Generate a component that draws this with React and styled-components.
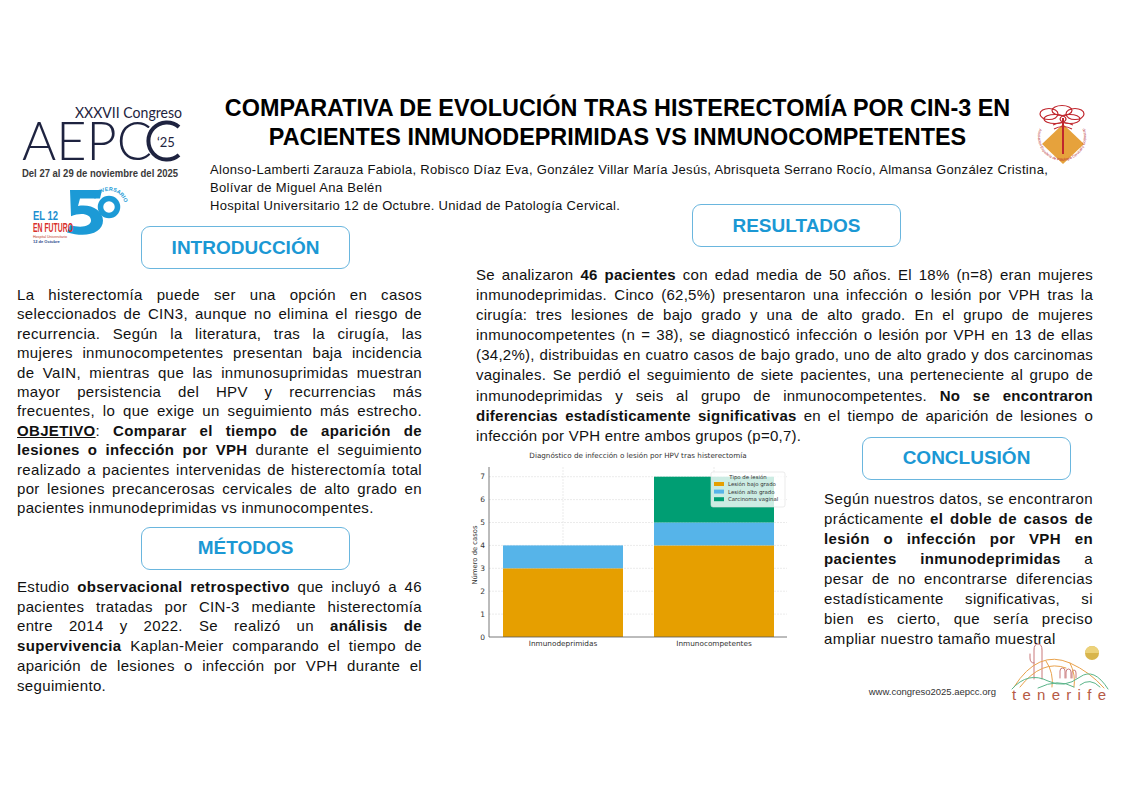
import React from 'react';
import styled, { createGlobalStyle } from 'styled-components';

const GlobalStyle = createGlobalStyle`
  body {
    margin: 0;
    background: #fff;
    font-family: "Liberation Sans", Arial, sans-serif;
  }
`;

function AepccLogo() {
  return (
    <LogoSvg width="170" height="85" viewBox="0 0 170 85" $ml={5}>
      <text x="53" y="18" fontSize="15" fill="#1e2340" fontFamily="Lato, Liberation Sans" textLength="107" lengthAdjust="spacingAndGlyphs">
        XXXVII Congreso
      </text>
      <text x="0" y="60" fontSize="53" fontWeight="300" fill="#1e2340" fontFamily="Lato, Liberation Sans" textLength="130" lengthAdjust="spacingAndGlyphs">
        AEPC
      </text>
      <path d="M157 27 A18.5 18.5 0 1 0 157 55" fill="none" stroke="#1e2340" strokeWidth="4" />
      <text x="135" y="47" fontSize="13" fill="#1e2340" fontFamily="Lato, Liberation Sans">‘25</text>
      <text x="0" y="77" fontSize="10.5" fontWeight="700" fill="#3a3a3a" fontFamily="Liberation Sans" textLength="156" lengthAdjust="spacingAndGlyphs">
        Del 27 al 29 de noviembre del 2025
      </text>
    </LogoSvg>
  );
}

function FiftyLogo() {
  return (
    <LogoSvg width="95" height="58" viewBox="0 0 95 58" $ml={13} $mt={3}>
      <path d="M40 2 H72 L70 10.5 H50 L48 18 C61 15.6 73 22.4 73 32.6 C73 43.7 60 48.8 45 46.2 L37 44.5 L40 36.9 C50 40.3 61 38.6 61 32.6 C61 25.8 51 24.1 41 28.2 Z" fill="#1c9ad6" />
      <circle cx="79" cy="19" r="8.5" fill="none" stroke="#1c9ad6" strokeWidth="5.5" />
      <defs>
        <path id="annivArc" d="M65 11 A16 16 0 1 1 88 32" />
      </defs>
      <text fontSize="5.4" fontWeight="700" fill="#1c9ad6" fontFamily="Liberation Sans">
        <textPath href="#annivArc">ANIVERSARIO</textPath>
      </text>
      <text x="3" y="32" fontSize="12" fontWeight="700" fill="#1c8fd0" fontFamily="Liberation Sans" textLength="25" lengthAdjust="spacingAndGlyphs">EL 12</text>
      <text x="3" y="44" fontSize="12" fontWeight="700" fill="#d9302c" fontFamily="Liberation Sans" textLength="40" lengthAdjust="spacingAndGlyphs">EN FUTURO</text>
      <text x="3" y="50" fontSize="3.6" fill="#c0392b" fontFamily="Liberation Sans">Hospital Universitario</text>
      <text x="3" y="55" fontSize="4" fontWeight="700" fill="#2a4a8a" fontFamily="Liberation Sans">12 de Octubre</text>
    </LogoSvg>
  );
}

function SocietyLogo() {
  return (
    <LogoSvg width="66" height="70" viewBox="0 0 66 70">
      <polygon points="35,20 56,40 35,60 14,40" fill="#e6a23c" />
      <g fill="none" stroke="#c0262d" strokeWidth="1.2">
        <ellipse cx="21" cy="10" rx="9" ry="5.5" />
        <ellipse cx="34" cy="6.5" rx="10" ry="5" />
        <ellipse cx="47" cy="10" rx="9" ry="5.5" />
        <ellipse cx="27" cy="15" rx="11" ry="4.5" />
        <ellipse cx="42" cy="15" rx="10" ry="4.5" />
        <path d="M25 21 Q35 16 45 21 M26 25 Q35 20 44 25" />
      </g>
      <line x1="35" y1="14" x2="35" y2="50" stroke="#c0262d" strokeWidth="2" />
      <defs>
        <path id="ringArc" d="M11.4 24.6 A24 24 0 1 0 56.6 24.6" />
      </defs>
      <text fontSize="3.7" fill="#b3262d" fontFamily="Liberation Sans">
        <textPath href="#ringArc">Asociación Española de Patología Cervical y Colposcopia</textPath>
      </text>
    </LogoSvg>
  );
}

function TenerifeLogo() {
  return (
    <svg width="100" height="62" viewBox="0 0 100 62">
      <circle cx="82" cy="12" r="7" fill="#d8b54c" />
      <path d="M75 12 A7 7 0 0 1 89 12 Z" fill="#ecd27a" />
      <g fill="none" strokeWidth="1" strokeLinecap="round">
        <path d="M24 38 V9 Q24 3 28 3 Q32 3 32 9 V38 M24 22 Q20 22 20 17 V13" stroke="#c9797a" />
        <path d="M50 37 V30 Q50 27 52.5 27 Q55 27 55 30 V37 M56 37 V31 Q56 28 58.5 28 Q61 28 61 31 V37 M62 37 V32 Q62 29 64 29 Q66 29 66 32 V37" stroke="#c9797a" />
        <path d="M4 46 Q28 8 60 22 Q80 31 94 47" stroke="#e9a24c" />
        <path d="M10 46 Q32 18 56 27 M36 20 Q44 32 42 46 M60 22 Q66 34 64 46" stroke="#e9a24c" />
        <path d="M2 48 Q18 30 38 40 Q54 48 70 36 Q84 26 98 48" stroke="#5bb58a" />
        <path d="M28 47 Q48 37 64 46 M70 44 Q80 36 90 46" stroke="#5bb58a" />
      </g>
      <text x="2" y="59" fontSize="15" fill="#b65a45" fontFamily="Liberation Sans" textLength="94" lengthAdjust="spacing">tenerife</text>
    </svg>
  );
}

const bars = [
  { x: 33, label: 'Inmunodeprimidas', parts: [3, 1, 0] },
  { x: 184, label: 'Inmunocompetentes', parts: [4, 1, 2] },
];
const colors = ['#E69F00', '#56B4E9', '#009E73'];
const legend = ['Lesión bajo grado', 'Lesión alto grado', 'Carcinoma vaginal'];
const yOf = (v) => 192 - v * 22.9;

function Chart() {
  return (
    <ChartSvg width="318" height="205" viewBox="0 0 318 205">
      <text x="168" y="13" fontSize="7.2" fill="#333" textAnchor="middle" fontFamily="DejaVu Sans">
        Diagnóstico de infección o lesión por HPV tras histerectomía
      </text>
      {[1, 2, 3, 4, 5, 6, 7].map((v) => (
        <line key={v} x1="19" x2="317" y1={yOf(v)} y2={yOf(v)} stroke="#e3e3e3" strokeWidth="0.7" strokeDasharray="2 1" />
      ))}
      {bars.map((b) => (
        <line key={b.label} x1={b.x + 60} x2={b.x + 60} y1="22" y2="192" stroke="#e3e3e3" strokeWidth="0.7" strokeDasharray="2 1" />
      ))}
      {bars.map((b) => {
        let base = 0;
        return b.parts.map((p, i) => {
          const rect = p > 0 ? (
            <rect key={`${b.label}-${i}`} x={b.x} width="120" y={yOf(base + p)} height={p * 22.9} fill={colors[i]} />
          ) : null;
          base += p;
          return rect;
        });
      })}
      <line x1="19" x2="19" y1="22" y2="192" stroke="#555" strokeWidth="0.8" />
      <line x1="19" x2="317" y1="192" y2="192" stroke="#555" strokeWidth="0.8" />
      {[0, 1, 2, 3, 4, 5, 6, 7].map((v) => (
        <text key={v} x="15" y={yOf(v) + 2.6} fontSize="7.5" fill="#333" textAnchor="end" fontFamily="DejaVu Sans">{v}</text>
      ))}
      {bars.map((b) => (
        <text key={b.label} x={b.x + 60} y="201" fontSize="7.3" fill="#333" textAnchor="middle" fontFamily="DejaVu Sans">{b.label}</text>
      ))}
      <text transform="translate(7 110) rotate(-90)" fontSize="6.8" fill="#333" textAnchor="middle" fontFamily="DejaVu Sans">Número de casos</text>
      <rect x="241" y="27" width="74" height="35" rx="2" fill="#fff" fillOpacity="0.8" stroke="#ddd" strokeWidth="0.6" />
      <text x="278" y="34" fontSize="5.4" fill="#333" textAnchor="middle" fontFamily="DejaVu Sans">Tipo de lesión</text>
      {legend.map((l, i) => (
        <g key={l}>
          <rect x="244" y={37 + i * 7.6} width="10" height="4" fill={colors[i]} />
          <text x="258" y={41 + i * 7.6} fontSize="5.4" fill="#333" fontFamily="DejaVu Sans">{l}</text>
        </g>
      ))}
    </ChartSvg>
  );
}

export default function App() {
  return (
    <>
      <GlobalStyle />
      <Page>
        <Header>
          <LogoStack>
            <AepccLogo />
            <FiftyLogo />
          </LogoStack>
          <HeadCenter>
            <Title>
              COMPARATIVA DE EVOLUCIÓN TRAS HISTERECTOMÍA POR CIN-3 EN
              <br />
              PACIENTES INMUNODEPRIMIDAS VS INMUNOCOMPETENTES
            </Title>
            <Authors>
              Alonso-Lamberti Zarauza Fabiola, Robisco Díaz Eva, González Villar María Jesús, Abrisqueta Serrano Rocío, Almansa González Cristina,
              <br />
              Bolívar de Miguel Ana Belén
            </Authors>
            <Authors>Hospital Universitario 12 de Octubre. Unidad de Patología Cervical.</Authors>
          </HeadCenter>
          <RightLogo>
            <SocietyLogo />
          </RightLogo>
        </Header>

        <Body>
          <LeftCol>
            <SectionTitle $ml={124}>INTRODUCCIÓN</SectionTitle>
            <Paragraph $mt={16} $lh={19.4}>
              La histerectomía puede ser una opción en casos seleccionados de CIN3, aunque no elimina el riesgo de
              recurrencia. Según la literatura, tras la cirugía, las mujeres inmunocompetentes presentan baja incidencia
              de VaIN, mientras que las inmunosuprimidas muestran mayor persistencia del HPV y recurrencias más
              frecuentes, lo que exige un seguimiento más estrecho. <b><u>OBJETIVO</u></b>:{' '}
              <b>Comparar el tiempo de aparición de lesiones o infección por VPH</b> durante el seguimiento realizado a
              pacientes intervenidas de histerectomía total por lesiones precancerosas cervicales de alto grado en
              pacientes inmunodeprimidas vs inmunocompentes.
            </Paragraph>
            <SectionTitle $ml={124} $mt={9}>MÉTODOS</SectionTitle>
            <Paragraph $mt={7} $lh={19.8}>
              Estudio <b>observacional retrospectivo</b> que incluyó a 46 pacientes tratadas por CIN-3 mediante
              histerectomía entre 2014 y 2022. Se realizó un <b>análisis de supervivencia</b> Kaplan-Meier comparando el
              tiempo de aparición de lesiones o infección por VPH durante el seguimiento.
            </Paragraph>
          </LeftCol>

          <RightCol>
            <SectionTitle $ml={216}>RESULTADOS</SectionTitle>
            <Paragraph $mt={18} $lh={20.1} $ls={0.25}>
              Se analizaron <b>46 pacientes</b> con edad media de 50 años. El 18% (n=8) eran mujeres inmunodeprimidas.
              Cinco (62,5%) presentaron una infección o lesión por VPH tras la cirugía: tres lesiones de bajo grado y una
              de alto grado. En el grupo de mujeres inmunocompetentes (n = 38), se diagnosticó infección o lesión por VPH
              en 13 de ellas (34,2%), distribuidas en cuatro casos de bajo grado, uno de alto grado y dos carcinomas
              vaginales. Se perdió el seguimiento de siete pacientes, una perteneciente al grupo de inmunodeprimidas y
              seis al grupo de inmunocompetentes. <b>No se encontraron diferencias estadísticamente significativas</b> en
              el tiempo de aparición de lesiones o infección por VPH entre ambos grupos (p=0,7).
            </Paragraph>
            <Lower>
              <div>
                <Chart />
              </div>
              <ConclusionCol>
                <SectionTitle $ml={38}>CONCLUSIÓN</SectionTitle>
                <Paragraph $mt={9} $lh={20} $ls={0.4}>
                  Según nuestros datos, se encontraron prácticamente{' '}
                  <b>el doble de casos de lesión o infección por VPH en pacientes inmunodeprimidas</b> a pesar de no
                  encontrarse diferencias estadísticamente significativas, si bien es cierto, que sería preciso ampliar
                  nuestro tamaño muestral
                </Paragraph>
                <Footer>
                  <Url>www.congreso2025.aepcc.org</Url>
                  <TenerifeLogo />
                </Footer>
              </ConclusionCol>
            </Lower>
          </RightCol>
        </Body>
      </Page>
    </>
  );
}

const Page = styled.div`
  width: 1123px;
  height: 794px;
  box-sizing: border-box;
  padding: 94px 0 0 17px;
  background: #fff;
  color: #111;
  overflow: hidden;
`;

const Header = styled.header`
  display: flex;
  align-items: flex-start;
`;

const LogoStack = styled.div`
  width: 193px;
  flex: none;
  display: flex;
  flex-direction: column;
  padding-top: 6px;
`;

const LogoSvg = styled.svg`
  display: block;
  overflow: visible;
  margin-left: ${(p) => p.$ml || 0}px;
  margin-top: ${(p) => p.$mt || 0}px;
`;

const HeadCenter = styled.div`
  width: 815px;
  flex: none;
  display: flex;
  flex-direction: column;
`;

const Title = styled.h1`
  margin: 0;
  text-align: center;
  font-size: 23.4px;
  line-height: 29px;
  font-weight: 700;
  color: #000;
`;

const Authors = styled.p`
  margin: 0;
  font-size: 13px;
  line-height: 18px;
  letter-spacing: 0.33px;
  white-space: nowrap;
  color: #111;

  &:first-of-type {
    margin-top: 9px;
  }
`;

const RightLogo = styled.div`
  flex: none;
  padding: 10px 0 0 3px;
`;

const Body = styled.main`
  display: grid;
  grid-template-columns: 405px 617px;
  column-gap: 54px;
  margin-top: -42px;
`;

const LeftCol = styled.section`
  padding-top: 22px;
`;

const RightCol = styled.section``;

const SectionTitle = styled.h2`
  width: 209px;
  height: 43px;
  box-sizing: border-box;
  margin: ${(p) => p.$mt || 0}px 0 0 ${(p) => p.$ml || 0}px;
  border: 1.5px solid #6ab6de;
  border-radius: 9px;
  display: flex;
  align-items: center;
  justify-content: center;
  color: #1b98d4;
  font-size: 19px;
  font-weight: 700;
`;

const Paragraph = styled.p`
  margin: ${(p) => p.$mt || 0}px 0 0;
  font-size: 15px;
  line-height: ${(p) => p.$lh}px;
  letter-spacing: ${(p) => p.$ls ?? 0.34}px;
  text-align: justify;
  color: #111;
`;

const Lower = styled.div`
  display: grid;
  grid-template-columns: 348px 269px;
  margin-top: -9px;
`;

const ChartSvg = styled.svg`
  display: block;
  margin: 8px 0 0 -6px;
`;

const ConclusionCol = styled.div`
  display: flex;
  flex-direction: column;
`;

const Footer = styled.div`
  display: flex;
  justify-content: flex-end;
  align-items: flex-end;
  gap: 14px;
  margin: -8px -17px 0 0;
`;

const Url = styled.span`
  font-size: 9.5px;
  color: #333;
  padding-bottom: 6px;
`;
